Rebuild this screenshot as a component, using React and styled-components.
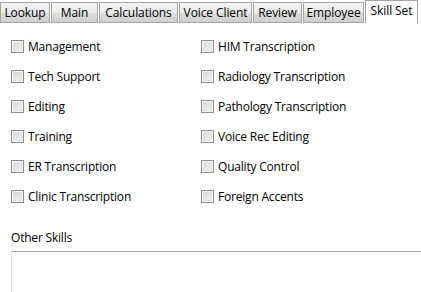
import React from "react";
import styled, { createGlobalStyle } from "styled-components";

const GlobalStyle = createGlobalStyle`
  html, body {
    margin: 0;
    padding: 0;
    background: #ffffff;
    overflow: hidden;
  }
  body {
    font-family: "Open Sans", "DejaVu Sans", sans-serif;
    font-size: 12px;
    color: #000;
  }
`;

const Page = styled.div`
  width: 421px;
  height: 292px;
  overflow: hidden;
  background: #fff;
`;

const TabStrip = styled.div`
  display: flex;
  align-items: flex-end;
  height: 23px;
  gap: 1px;
`;

const Tab = styled.div`
  flex: none;
  display: flex;
  align-items: center;
  justify-content: center;
  width: ${(p) => p.$w}px;
  height: ${(p) => (p.$active ? 23 : 21)}px;
  box-sizing: border-box;
  border: 1px solid #a5a5a5;
  border-bottom: ${(p) => (p.$active ? "none" : "1px solid #a5a5a5")};
  background: ${(p) =>
    p.$active ? "#ffffff" : "linear-gradient(#f2f2f2 0%, #ebebeb 50%, #dddddd 51%, #cfcfcf 100%)"};
  font-size: 12px;
  letter-spacing: -0.1px;
  line-height: 1;
  padding-top: ${(p) => (p.$active ? 0 : 1)}px;
  padding-bottom: ${(p) => (p.$active ? 3 : 0)}px;
`;

const Body = styled.div`
  padding: 17px 0 0 11px;
`;

const Grid = styled.div`
  display: grid;
  grid-template-columns: 190px 1fr;
  grid-auto-rows: 30px;
`;

const Option = styled.label`
  display: flex;
  align-items: center;
  gap: 4px;
  height: 13px;
  font-size: 12px;
  letter-spacing: -0.2px;
  white-space: nowrap;
`;

const Box = styled.span`
  flex: none;
  width: 13px;
  height: 13px;
  box-sizing: border-box;
  border: 1px solid #8e8f8f;
  background: #f4f4f4;
  position: relative;
  &::after {
    content: "";
    position: absolute;
    inset: 1px;
    border: 1px solid #e0e0e0;
    background: linear-gradient(135deg, #d9d9d9, #f2f2f2);
  }
`;

const OtherLabel = styled.div`
  margin-top: 9px;
  font-size: 12px;
  letter-spacing: -0.2px;
  height: 16px;
`;

const TextArea = styled.div`
  margin-top: 6px;
  width: 430px;
  height: 60px;
  border-top: 1px solid #ababab;
  border-left: 1px solid #e3e3e3;
`;

const tabs = [
  ["Lookup", 50],
  ["Main", 47],
  ["Calculations", 79],
  ["Voice Client", 73],
  ["Review", 49],
  ["Employee", 61],
  ["Skill Set", 53],
];

const skills = [
  ["Management", "HIM Transcription"],
  ["Tech Support", "Radiology Transcription"],
  ["Editing", "Pathology Transcription"],
  ["Training", "Voice Rec Editing"],
  ["ER Transcription", "Quality Control"],
  ["Clinic Transcription", "Foreign Accents"],
];

const App = () => {
  return (
    <Page>
      <GlobalStyle />
      <TabStrip>
        {tabs.map(([name, w]) => (
          <Tab key={name} $w={w} $active={name === "Skill Set"}>
            {name}
          </Tab>
        ))}
      </TabStrip>
      <Body>
        <Grid>
          {skills.flat().map((s) => (
            <Option key={s}>
              <Box />
              {s}
            </Option>
          ))}
        </Grid>
        <OtherLabel>Other Skills</OtherLabel>
        <TextArea />
      </Body>
    </Page>
  );
};

export default App;
